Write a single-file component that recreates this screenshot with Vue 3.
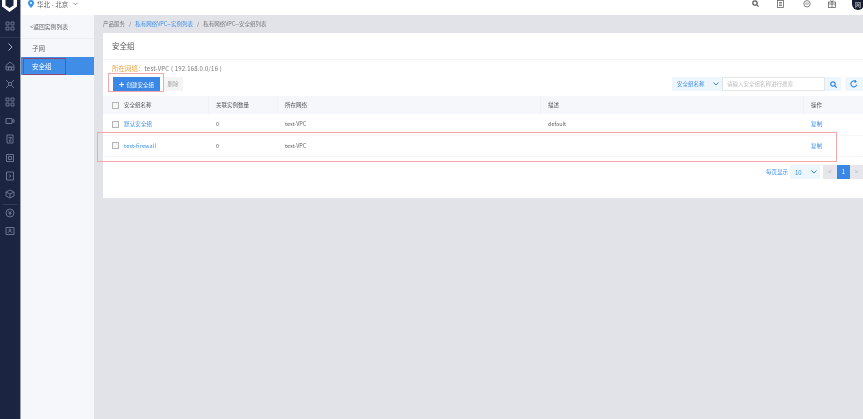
<template>
  <div class="page">
    <aside class="rail">
      <div class="logo">
        <svg width="15" height="12" viewBox="0 0 15 12">
          <path d="M0 0h3.500v5.500L7.500 8l4-2.500V0H15v6.500L7.500 12 0 6.500z" fill="#fff" />
        </svg>
      </div>
      <div class="rail-icons">
        <span v-for="icon in railTop" :key="icon.id" class="rail-icon" :class="icon.cls">
          <svg width="10" height="10" viewBox="0 0 10 10" fill="none" :stroke="icon.color || '#6a7491'" stroke-width="1">
            <path :d="icon.d" />
          </svg>
        </span>
        <div class="rail-line"></div>
        <span v-for="icon in railBottom" :key="icon.id" class="rail-icon">
          <svg width="10" height="10" viewBox="0 0 10 10" fill="none" stroke="#6a7491" stroke-width="1">
            <path :d="icon.d" />
          </svg>
        </span>
      </div>
    </aside>

    <div class="right">
      <header class="topbar">
        <div class="region">
          <svg width="6" height="8" viewBox="0 0 6 8">
            <path d="M3 0a3 3 0 0 1 3 3c0 2-3 5-3 5S0 5 0 3a3 3 0 0 1 3-3z" fill="#3a95e8" />
            <circle cx="3" cy="3" r="1" fill="#fff" />
          </svg>
          <span>华北 - 北京</span>
          <svg class="region-arrow" width="5" height="4" viewBox="0 0 6 4" fill="none" stroke="#666" stroke-width="0.8">
            <path d="M.5.5 3 3 5.500.5" />
          </svg>
        </div>
        <div class="top-actions">
          <svg class="top-search" width="7" height="7" viewBox="0 0 7 7" fill="none" stroke="#555" stroke-width="1.200">
            <circle cx="3" cy="3" r="2.200" /><path d="m4.600 4.600 2 2" />
          </svg>
          <svg class="top-doc" width="7" height="8" viewBox="0 0 7 8" fill="none" stroke="#666" stroke-width="0.8">
            <rect x=".5" y=".5" width="6" height="7" /><path d="M2 2.500h3M2 4h3M2 5.500h3" />
          </svg>
          <svg class="top-chat" width="8" height="8" viewBox="0 0 8 8" fill="none" stroke="#666" stroke-width="0.8">
            <circle cx="4" cy="3.800" r="3.200" /><path d="M3 2.500v2.200M5 2.500v2.200" />
          </svg>
          <svg class="top-box" width="8" height="8" viewBox="0 0 8 8" fill="none" stroke="#666" stroke-width="0.8">
            <rect x=".5" y="2" width="7" height="5.500" /><path d="M.5 4h7M4 .5V7.500M2.500.5 4 2 5.500.5" />
          </svg>
          <span class="avatar">网</span>
        </div>
      </header>

      <div class="body">
        <nav class="subnav">
          <div class="back">&lt;返回实例列表</div>
          <div class="subnav-item">子网</div>
          <div class="subnav-item active">安全组</div>
        </nav>

        <main class="main">
          <div class="crumbs">
            <span>产品服务</span>
            <i>/</i>
            <a>私有网络VPC--实例列表</a>
            <i>/</i>
            <span>私有网络VPC--安全组列表</span>
          </div>

          <section class="card">
            <h2 class="title">安全组</h2>
            <div class="card-body">
              <p class="network"><b>所在网络：</b>test-VPC ( 192.168.0.0/16 )</p>

              <div class="toolbar">
                <button class="btn-create"><em>+</em>创建安全组</button>
                <button class="btn-delete">删除</button>
                <div class="filter">
                  <div class="filter-select">
                    <span>安全组名称</span>
                    <svg width="6" height="4" viewBox="0 0 6 4" fill="none" stroke="#2f86e5" stroke-width="1">
                      <path d="M.5.500 3 3 5.500.500" />
                    </svg>
                  </div>
                  <input class="filter-input" placeholder="请输入安全组名称进行搜索" />
                  <div class="filter-btn">
                    <svg width="7" height="7" viewBox="0 0 7 7" fill="none" stroke="#2f86e5" stroke-width="1.200">
                      <circle cx="3" cy="3" r="2.200" /><path d="m4.600 4.600 2 2" />
                    </svg>
                  </div>
                  <div class="refresh">
                    <svg width="8" height="8" viewBox="0 0 8 8" fill="none" stroke="#2f86e5" stroke-width="1.100">
                      <path d="M6.800 4.600A3 3 0 1 1 5.600 1.400M5 .2l1 1.400-1.500.8" />
                    </svg>
                  </div>
                </div>
              </div>
            </div>

            <div class="row head">
              <div class="cell"><span class="check"></span>安全组名称</div>
              <div class="cell">关联实例数量</div>
              <div class="cell">所在网络</div>
              <div class="cell">描述</div>
              <div class="cell">操作</div>
            </div>
            <div v-for="item in groups" :key="item.name" class="row">
              <div class="cell"><span class="check"></span><a>{{ item.name }}</a></div>
              <div class="cell">{{ item.count }}</div>
              <div class="cell">{{ item.network }}</div>
              <div class="cell">{{ item.desc }}</div>
              <div class="cell"><a>复制</a></div>
            </div>

            <div class="pager">
              <span class="pager-label">每页显示</span>
              <div class="pager-size">
                <span>10</span>
                <svg width="6" height="4" viewBox="0 0 6 4" fill="none" stroke="#2f86e5" stroke-width="1">
                  <path d="M.5.500 3 3 5.500.500" />
                </svg>
              </div>
              <span class="page-btn">&lt;</span>
              <span class="page-btn current">1</span>
              <span class="page-btn">&gt;</span>
            </div>
          </section>
        </main>
      </div>
    </div>

    <!-- hand-drawn markers on the screenshot -->
    <div class="mark mark-tab"></div>
    <div class="mark mark-create"></div>
    <div class="mark mark-row"></div>
  </div>
</template>

<script setup>
const railTop = [
  { id: 'grid', d: 'M1 1h3v3H1zM6 1h3v3H6zM1 6h3v3H1zM6 6h3v3H6z', cls: 'first' },
  { id: 'arrow', d: 'M3.500 1.500 7 5 3.500 8.500', cls: 'arrow', color: '#a9afc2' },
  { id: 'home', d: 'M1 4.500 5 1l4 3.500V9H1zM3.500 9V6h3v3M1 6h8' },
  { id: 'net', d: 'M1 1l2.500 2.500h3L9 1M1 9l2.500-2.500h3L9 9M3.500 3.500v3M6.500 3.500v3' },
  { id: 'apps', d: 'M1 1h3v3H1zM6 1h3v3H6zM1 6h3v3H1zM6 6h3v3H6zM5 5h0' },
  { id: 'video', d: 'M1 2.500h6v5H1zM7 4.500l2-1v3l-2-1' },
  { id: 'file', d: 'M2 1h6v8H2zM3.500 3.500h3L4 7h2.500' },
  { id: 'chip', d: 'M1.500 1.500h7v7h-7zM3.500 3.500h3v3h-3z' },
  { id: 'play', d: 'M1.500 1h7v8h-7zM4 3.500 6 5 4 6.500' },
  { id: 'cube', d: 'M5 1l4 2v4L5 9 1 7V3zM1 3l4 2 4-2M5 5v4' }
]
const railBottom = [
  { id: 'yen', d: 'M9 5a4 4 0 1 1-8 0 4 4 0 0 1 8 0zM3.500 3 5 5l1.500-2M5 5v2.500M3.500 5.500h3' },
  { id: 'user', d: 'M1 1.500h8v7H1zM3 7c0-2 4-2 4 0M6 4a1 1 0 1 1-2 0 1 1 0 0 1 2 0z' }
]

const groups = [
  { name: '默认安全组', count: 0, network: 'test-VPC', desc: 'default' },
  { name: 'test-firewall', count: 0, network: 'test-VPC', desc: '' }
]
</script>

<style>
html,
body {
  margin: 0;
  background: #e2e3e8;
}
</style>

<style scoped>
.page {
  position: relative;
  display: flex;
  width: 863px;
  height: 419px;
  overflow: hidden;
  font-family: "Noto Sans CJK SC", "Liberation Sans", sans-serif;
  font-size: 6px;
  color: #666;
  background: #e2e3e8;
  filter: blur(0.3px);
}

.rail {
  width: 21px;
  box-sizing: border-box;
  flex-shrink: 0;
  background: #1b2440;
  border-right: 1px solid #9aa0b2;
}
.logo {
  height: 14px;
  padding-left: 2px;
  display: flex;
  align-items: flex-start;
}
.rail-icons {
  display: flex;
  flex-direction: column;
  align-items: center;
  padding-top: 3px;
}
.rail-icon {
  width: 20px;
  height: 18.4px;
  padding-right: 1px;
  box-sizing: border-box;
  display: flex;
  align-items: center;
  justify-content: center;
}
.rail-icon.arrow {
  height: 19.4px;
  margin-top: 1.6px;
  border-top: 1px solid #2c3552;
}
.rail-line {
  width: 14px;
  height: 1px;
  background: #333c58;
  margin: 0 0 -1px;
}

.right {
  flex: 1;
  min-width: 0;
  display: flex;
  flex-direction: column;
}
.topbar {
  height: 15px;
  background: #fff;
  display: flex;
  justify-content: space-between;
  align-items: flex-start;
  padding-left: 7px;
}
.region {
  display: flex;
  align-items: center;
  gap: 3px;
  height: 8px;
  font-size: 6.500px;
  color: #666;
}
.region-arrow {
  margin-left: 2px;
}
.top-actions {
  display: flex;
  align-items: flex-start;
  height: 15px;
}
.top-search {
  margin-right: 18px;
}
.top-doc {
  margin-right: 19px;
}
.top-chat {
  margin-right: 17px;
}
.top-box {
  margin-right: 16px;
}
.avatar {
  width: 12px;
  height: 11px;
  margin-right: -1px;
  margin-top: -1px;
  border-radius: 0 0 6px 6px;
  background: #151c33;
  color: #ddd;
  font-size: 6px;
  line-height: 11px;
  text-align: center;
}

.body {
  flex: 1;
  display: flex;
  min-height: 0;
}
.subnav {
  width: 73px;
  flex-shrink: 0;
  background: #f5f7fb;
}
.back {
  height: 23px;
  line-height: 23px;
  padding-left: 9px;
  border-bottom: 1px solid #eceef2;
  font-size: 5.800px;
}
.subnav-item {
  height: 18px;
  line-height: 18px;
  padding-left: 11px;
  font-size: 6.500px;
}
.subnav-item.active {
  background: #3f8de6;
  color: #fff;
}

.main {
  flex: 1;
  min-width: 0;
  padding-left: 9px;
}
.crumbs {
  height: 18px;
  line-height: 18px;
  font-size: 5.500px;
  color: #777;
}
.crumbs i {
  font-style: normal;
  margin: 0 4px;
}
.crumbs a {
  color: #3d8fe8;
}

.card {
  background: #fff;
  height: 165px;
}
.title {
  margin: 0;
  height: 26px;
  line-height: 26px;
  padding-left: 9px;
  font-size: 7.500px;
  font-weight: 400;
  color: #555;
  border-bottom: 1px solid #f3f4f6;
}
.card-body {
  padding: 2px 0 0 9px;
}
.network {
  margin: 0;
  height: 13px;
  line-height: 13px;
  font-size: 6px;
  letter-spacing: 0.2px;
  color: #777;
}
.network b {
  font-weight: 400;
  color: #e6a94a;
  font-size: 6.500px;
  letter-spacing: 0;
}
.toolbar {
  display: flex;
  align-items: center;
  height: 14px;
  margin-top: 2px;
}
.btn-create,
.btn-delete {
  border: none;
  padding: 0;
  height: 14px;
  font: inherit;
}
.btn-create {
  width: 47px;
  background: #3a87e6;
  color: #fff;
  font-size: 5.500px;
  margin-left: 1px;
}
.btn-create em {
  font-style: normal;
  font-size: 9px;
  line-height: 9px;
  font-weight: 700;
  margin-right: 2px;
  vertical-align: -1px;
}
.btn-delete {
  width: 20px;
  margin-left: 3px;
  background: #f5f5f6;
  color: #a5a5a5;
  font-size: 5.500px;
}
.filter {
  margin-left: auto;
  display: flex;
  align-items: center;
  height: 14px;
}
.filter-select {
  width: 50px;
  height: 14px;
  box-sizing: border-box;
  padding: 0 3px 0 5px;
  display: flex;
  align-items: center;
  justify-content: space-between;
  background: #edf5fd;
  color: #3d8fe8;
  font-size: 5.500px;
}
.filter-input {
  width: 103px;
  height: 14px;
  box-sizing: border-box;
  padding: 0 4px;
  border: 1px solid #e4e5e8;
  outline: none;
  font: inherit;
  font-size: 5.500px;
}
.filter-input::placeholder {
  color: #bbb;
}
.filter-btn,
.refresh {
  height: 14px;
  display: flex;
  align-items: center;
  justify-content: center;
  background: #edf5fd;
}
.filter-btn {
  width: 16px;
}
.refresh {
  width: 18px;
  margin-left: 4px;
}

.row {
  display: grid;
  grid-template-columns: 105px 69px 263px 263px 60px;
  height: 21.500px;
  border-bottom: 1px solid #f6f7f9;
  box-sizing: border-box;
}
.row.head {
  height: 18px;
  margin-top: 5px;
  background: #f5f7fb;
  border-bottom: none;
}
.cell {
  display: flex;
  align-items: center;
  padding-left: 8px;
  font-size: 5.500px;
  color: #666;
  white-space: nowrap;
}
.row.head .cell {
  color: #555;
}
.row.head .cell + .cell {
  border-left: 1px solid #f1f2f6;
  padding-left: 7px;
}
.cell:first-child {
  padding-left: 9px;
}
.cell a {
  color: #3d8fe8;
  letter-spacing: 0.15px;
}
.check {
  width: 5px;
  height: 5px;
  margin-right: 5px;
  border: 1px solid #b5b5b5;
  background: #f6f6f6;
  flex-shrink: 0;
}

.pager {
  display: flex;
  align-items: center;
  justify-content: flex-end;
  height: 14px;
  margin-top: 8px;
}
.pager-label {
  color: #3d8fe8;
  font-size: 5.500px;
  margin-right: 2px;
}
.pager-size {
  width: 30px;
  height: 14px;
  box-sizing: border-box;
  padding: 0 3px 0 5px;
  display: flex;
  align-items: center;
  justify-content: space-between;
  background: #edf5fd;
  color: #3d8fe8;
}
.page-btn {
  width: 13px;
  height: 14px;
  line-height: 14px;
  text-align: center;
  background: #e5e7eb;
  color: #aaa;
}
.pager-size + .page-btn {
  width: 14px;
  margin-left: 3px;
}
.page-btn.current {
  background: #3a87e6;
  color: #fff;
}

.mark {
  position: absolute;
  box-sizing: border-box;
  border: 1.500px solid #f4a6aa;
}
.mark-tab {
  left: 23px;
  top: 58px;
  width: 43px;
  height: 17px;
  border-color: #8c4a70;
}
.mark-create {
  left: 108px;
  top: 73px;
  width: 56px;
  height: 19px;
}
.mark-row {
  left: 97px;
  top: 132px;
  width: 740px;
  height: 30px;
}
</style>
